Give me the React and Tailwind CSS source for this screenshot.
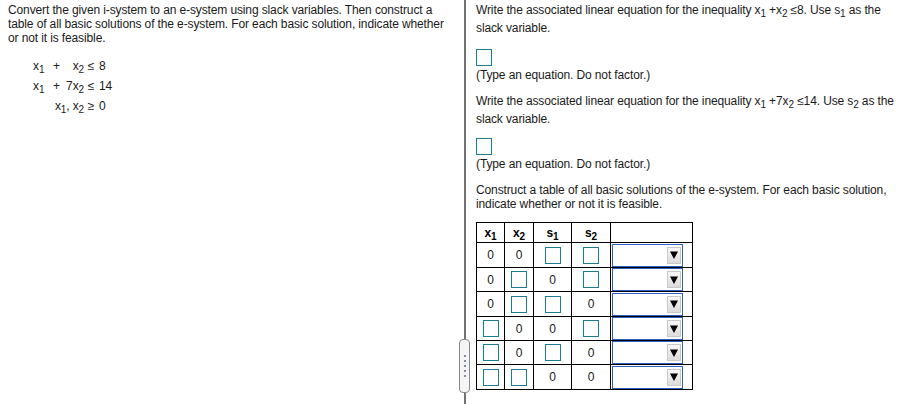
import React from "react";

const font = { fontFamily: '"Liberation Sans", Arial, sans-serif' };

function Sub({ children }) {
  return (
    <sub className="relative top-[3px] text-[10px] leading-none align-baseline">
      {children}
    </sub>
  );
}

function AnswerBox({ className = "" }) {
  return (
    <span
      className={`h-[17px] w-[16px] border-[1.5px] border-[#1b7c92] bg-white ${className}`}
    />
  );
}

function Dropdown() {
  return (
    <div className="flex h-[23px] w-[71px] items-center justify-end border-[1.5px] border-[#2f5fc4] bg-white pr-[1px]">
      <div className="flex h-[17px] w-[14px] items-center justify-center border border-[#c9c9c9] bg-gradient-to-b from-[#f7f7f7] to-[#dcdcdc]">
        <svg width="8" height="8" viewBox="0 0 8 8">
          <polygon points="0,0.5 8,0.5 4,8" fill="#000" />
        </svg>
      </div>
    </div>
  );
}

const rows = [
  { h: "h-[25px]", v: ["0", "0", null, null] },
  { h: "h-[24px]", v: ["0", null, "0", null] },
  { h: "h-[25px]", v: ["0", null, null, "0"] },
  { h: "h-[24px]", v: [null, "0", "0", null] },
  { h: "h-[24px]", v: [null, "0", null, "0"] },
  { h: "h-[25px]", v: [null, null, "0", "0"] },
];

function SolutionTable() {
  const cell = "border border-black text-center align-middle p-0";
  return (
    <table className="border-collapse text-[12px] text-black">
      <thead>
        <tr className="h-[20px]">
          <th className={`${cell} w-[28px] font-bold`}>
            x<Sub>1</Sub>
          </th>
          <th className={`${cell} w-[29px] font-bold`}>
            x<Sub>2</Sub>
          </th>
          <th className={`${cell} w-[38px] font-bold`}>
            s<Sub>1</Sub>
          </th>
          <th className={`${cell} w-[39px] font-bold`}>
            s<Sub>2</Sub>
          </th>
          <th className={`${cell} w-[82px]`} />
        </tr>
      </thead>
      <tbody>
        {rows.map((r, i) => (
          <tr key={i} className={r.h}>
            {r.v.map((v, j) => (
              <td key={j} className={cell}>
                {v ? (
                  <span className="text-[#1a1a1a]">{v}</span>
                ) : (
                  <div className="flex justify-center">
                    <AnswerBox className="block" />
                  </div>
                )}
              </td>
            ))}
            <td className={`${cell} pl-[1px]`}>
              <Dropdown />
            </td>
          </tr>
        ))}
      </tbody>
    </table>
  );
}

export default function App() {
  return (
    <div
      className="flex h-[404px] w-[909px] bg-white text-[12px] tracking-[-0.12px] text-[#1a1a1a]"
      style={font}
    >
      {/* question side */}
      <div className="w-[464px] shrink-0 pl-2 pr-3 pt-[3px]">
        <p className="leading-[14px]">
          Convert the given i-system to an e-system using slack variables. Then construct a
          table of all basic solutions of the e-system. For each basic solution, indicate whether
          or not it is feasible.
        </p>
        <div className="mt-[11px] grid grid-cols-[18px_11px_22px_14px_auto] pl-[25px] leading-[20px]">
          <span>
            x<Sub>1</Sub>
          </span>
          <span className="text-center">+</span>
          <span className="text-right">
            x<Sub>2</Sub>
          </span>
          <span className="text-center">≤</span>
          <span className="pl-[1px]">8</span>

          <span>
            x<Sub>1</Sub>
          </span>
          <span className="text-center">+</span>
          <span className="text-right">
            7x<Sub>2</Sub>
          </span>
          <span className="text-center">≤</span>
          <span className="pl-[1px]">14</span>

          <span className="col-span-3 text-right">
            x<Sub>1</Sub>, x<Sub>2</Sub>
          </span>
          <span className="text-center">≥</span>
          <span className="pl-[1px]">0</span>
        </div>
      </div>

      {/* divider with handle */}
      <div className="relative w-[2px] shrink-0 bg-[#727272]">
        <div className="absolute left-[-5px] top-[339px] flex h-[54px] w-[11px] flex-col items-center justify-center gap-[3px] rounded-[4px] border border-[#8a8a8a] bg-[#f4f5f7]">
          {[0, 1, 2, 3, 4].map((d) => (
            <span key={d} className="h-[2px] w-[2px] bg-[#8a8aa0]" />
          ))}
        </div>
      </div>

      {/* answer side */}
      <div className="flex-1 pl-[10px] pr-2 pt-[1px]">
        <p className="leading-[18px]">
          Write the associated linear equation for the inequality x<Sub>1</Sub> +x<Sub>2</Sub> ≤8.
          Use s<Sub>1</Sub> as the slack variable.
        </p>
        <AnswerBox className="mt-[12px] block" />
        <p className="mt-[2px] leading-[14px]">(Type an equation. Do not factor.)</p>

        <p className="mt-[10px] leading-[18px]">
          Write the associated linear equation for the inequality x<Sub>1</Sub> +7x<Sub>2</Sub>{" "}
          ≤14. Use s<Sub>2</Sub> as the slack variable.
        </p>
        <AnswerBox className="mt-[10px] block" />
        <p className="mt-[2px] leading-[14px]">(Type an equation. Do not factor.)</p>

        <p className="mt-[12px] leading-[14px]">
          Construct a table of all basic solutions of the e-system. For each basic solution,
          indicate whether or not it is feasible.
        </p>
        <div className="mt-[11px]">
          <SolutionTable />
        </div>
      </div>
    </div>
  );
}
